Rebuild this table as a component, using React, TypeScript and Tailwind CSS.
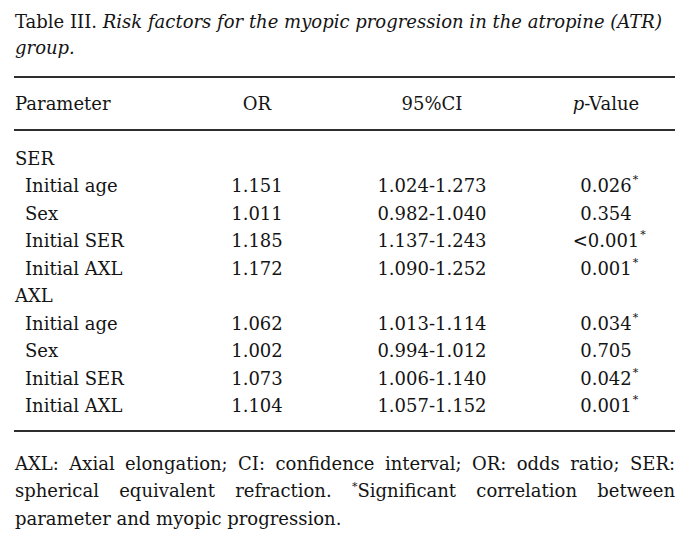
import React from "react";

type Row = { label: string; or: string; ci: string; p: string; sig: boolean; indent: boolean };

const rows: Row[] = [
  { label: "SER", or: "", ci: "", p: "", sig: false, indent: false },
  { label: "Initial age", or: "1.151", ci: "1.024-1.273", p: "0.026", sig: true, indent: true },
  { label: "Sex", or: "1.011", ci: "0.982-1.040", p: "0.354", sig: false, indent: true },
  { label: "Initial SER", or: "1.185", ci: "1.137-1.243", p: "<0.001", sig: true, indent: true },
  { label: "Initial AXL", or: "1.172", ci: "1.090-1.252", p: "0.001", sig: true, indent: true },
  { label: "AXL", or: "", ci: "", p: "", sig: false, indent: false },
  { label: "Initial age", or: "1.062", ci: "1.013-1.114", p: "0.034", sig: true, indent: true },
  { label: "Sex", or: "1.002", ci: "0.994-1.012", p: "0.705", sig: false, indent: true },
  { label: "Initial SER", or: "1.073", ci: "1.006-1.140", p: "0.042", sig: true, indent: true },
  { label: "Initial AXL", or: "1.104", ci: "1.057-1.152", p: "0.001", sig: true, indent: true },
];

const grid = "grid grid-cols-[183px_120px_230px_118px] leading-[27.5px]";

export default function App() {
  return (
    <div
      className="w-[689px] h-[545px] bg-white text-[#141414] text-[18px] overflow-hidden"
      style={{ fontFamily: '"DejaVu Serif", serif' }}
    >
      <div className="px-[14px] pt-[9px]">
        <p className="leading-[26px] pl-[1px]">
          Table III. <i>Risk factors for the myopic progression in the atropine (ATR) group.</i>
        </p>
        <div className="mt-[15px] h-[2px] bg-[#2e2e2e]" />
        <div className={`${grid} pt-[12px] pb-[11px]`}>
          <div className="pl-[1px]">Parameter</div>
          <div className="text-center">OR</div>
          <div className="text-center">95%CI</div>
          <div className="text-center">
            <i>p</i>-Value
          </div>
        </div>
        <div className="h-[2px] bg-[#2e2e2e]" />
        <div className="pt-[14px] pb-[10px]">
          {rows.map((r, i) => (
            <div key={i} className={grid}>
              <div className={r.indent ? "pl-[11px]" : "pl-[1px]"}>{r.label}</div>
              <div className="text-center">{r.or}</div>
              <div className="text-center">{r.ci}</div>
              <div className="text-center">
                <span className="relative">
                  {r.p}
                  {r.sig && (
                    <span className="absolute left-full ml-[1px] top-[-1px] text-[11px] leading-none">*</span>
                  )}
                </span>
              </div>
            </div>
          ))}
        </div>
        <div className="h-[2px] bg-[#2e2e2e]" />
        <p className="mt-[18px] leading-[27.5px] text-justify pl-[1px]">
          AXL: Axial elongation; CI: confidence interval; OR: odds ratio; SER: spherical equivalent refraction.{" "}
          <span className="relative top-[-7px] text-[11px] leading-none">*</span>Significant correlation between
          parameter and myopic progression.
        </p>
      </div>
    </div>
  );
}
